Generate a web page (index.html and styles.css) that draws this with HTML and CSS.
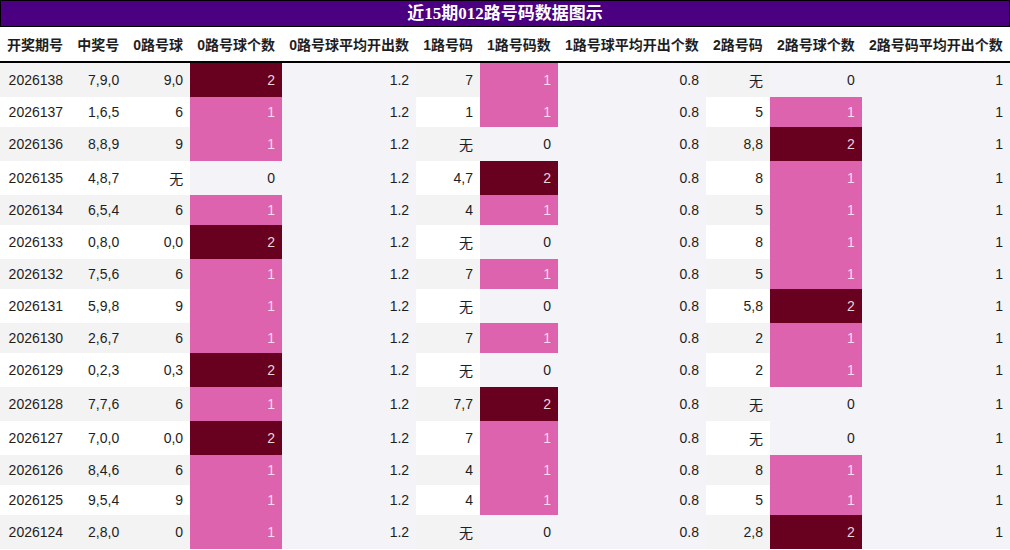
FILE: index.html
```html
<!DOCTYPE html>
<html lang="zh">
<head>
<meta charset="utf-8">
<title>近15期012路号码数据图示</title>
<link rel="stylesheet" href="styles.css">
</head>
<body>
<div class="title">近15期012路号码数据图示</div>
<table class="data">
<thead>
<tr><th>开奖期号</th><th>中奖号</th><th>0路号球</th><th>0路号球个数</th><th>0路号球平均开出数</th><th>1路号码</th><th>1路号码数</th><th>1路号球平均开出个数</th><th>2路号码</th><th>2路号球个数</th><th>2路号码平均开出个数</th></tr>
</thead>
<tbody>
<tr><td>2026138</td><td>7,9,0</td><td>9,0</td><td class="n2">2</td><td class="avg">1.2</td><td>7</td><td class="n1">1</td><td class="avg">0.8</td><td>无</td><td class="n0">0</td><td class="avg">1</td></tr>
<tr><td>2026137</td><td>1,6,5</td><td>6</td><td class="n1">1</td><td class="avg">1.2</td><td>1</td><td class="n1">1</td><td class="avg">0.8</td><td>5</td><td class="n1">1</td><td class="avg">1</td></tr>
<tr><td>2026136</td><td>8,8,9</td><td>9</td><td class="n1">1</td><td class="avg">1.2</td><td>无</td><td class="n0">0</td><td class="avg">0.8</td><td>8,8</td><td class="n2">2</td><td class="avg">1</td></tr>
<tr><td>2026135</td><td>4,8,7</td><td>无</td><td class="n0">0</td><td class="avg">1.2</td><td>4,7</td><td class="n2">2</td><td class="avg">0.8</td><td>8</td><td class="n1">1</td><td class="avg">1</td></tr>
<tr><td>2026134</td><td>6,5,4</td><td>6</td><td class="n1">1</td><td class="avg">1.2</td><td>4</td><td class="n1">1</td><td class="avg">0.8</td><td>5</td><td class="n1">1</td><td class="avg">1</td></tr>
<tr><td>2026133</td><td>0,8,0</td><td>0,0</td><td class="n2">2</td><td class="avg">1.2</td><td>无</td><td class="n0">0</td><td class="avg">0.8</td><td>8</td><td class="n1">1</td><td class="avg">1</td></tr>
<tr><td>2026132</td><td>7,5,6</td><td>6</td><td class="n1">1</td><td class="avg">1.2</td><td>7</td><td class="n1">1</td><td class="avg">0.8</td><td>5</td><td class="n1">1</td><td class="avg">1</td></tr>
<tr><td>2026131</td><td>5,9,8</td><td>9</td><td class="n1">1</td><td class="avg">1.2</td><td>无</td><td class="n0">0</td><td class="avg">0.8</td><td>5,8</td><td class="n2">2</td><td class="avg">1</td></tr>
<tr><td>2026130</td><td>2,6,7</td><td>6</td><td class="n1">1</td><td class="avg">1.2</td><td>7</td><td class="n1">1</td><td class="avg">0.8</td><td>2</td><td class="n1">1</td><td class="avg">1</td></tr>
<tr><td>2026129</td><td>0,2,3</td><td>0,3</td><td class="n2">2</td><td class="avg">1.2</td><td>无</td><td class="n0">0</td><td class="avg">0.8</td><td>2</td><td class="n1">1</td><td class="avg">1</td></tr>
<tr><td>2026128</td><td>7,7,6</td><td>6</td><td class="n1">1</td><td class="avg">1.2</td><td>7,7</td><td class="n2">2</td><td class="avg">0.8</td><td>无</td><td class="n0">0</td><td class="avg">1</td></tr>
<tr><td>2026127</td><td>7,0,0</td><td>0,0</td><td class="n2">2</td><td class="avg">1.2</td><td>7</td><td class="n1">1</td><td class="avg">0.8</td><td>无</td><td class="n0">0</td><td class="avg">1</td></tr>
<tr><td>2026126</td><td>8,4,6</td><td>6</td><td class="n1">1</td><td class="avg">1.2</td><td>4</td><td class="n1">1</td><td class="avg">0.8</td><td>8</td><td class="n1">1</td><td class="avg">1</td></tr>
<tr><td>2026125</td><td>9,5,4</td><td>9</td><td class="n1">1</td><td class="avg">1.2</td><td>4</td><td class="n1">1</td><td class="avg">0.8</td><td>5</td><td class="n1">1</td><td class="avg">1</td></tr>
<tr><td>2026124</td><td>2,8,0</td><td>0</td><td class="n1">1</td><td class="avg">1.2</td><td>无</td><td class="n0">0</td><td class="avg">0.8</td><td>2,8</td><td class="n2">2</td><td class="avg">1</td></tr>
</tbody>
</table>
</body>
</html>
```
FILE: styles.css
```css
html, body {
  margin: 0;
  padding: 0;
  background: #ffffff;
}

body {
  font-family: "Liberation Sans", "Noto Sans CJK SC", sans-serif;
  font-size: 14px;
  color: #1e1e1e;
}

.title {
  background: #4b0082;
  border: 1px solid #000000;
  color: #ffffff;
  font-family: "Liberation Serif", "Noto Sans CJK SC", serif;
  font-weight: bold;
  font-size: 17px;
  text-align: center;
  line-height: 25px;
  height: 25px;
}

.data {
  width: 100%;
  border-collapse: collapse;
  border-spacing: 0;
}

.data th {
  font-weight: bold;
  background: #ffffff;
  padding: 7px 7px;
  text-align: center;
  white-space: nowrap;
  border-bottom: 2px solid #000000;
}

.data td {
  padding: 7px 7px;
  text-align: right;
  white-space: nowrap;
}

.data tbody tr:nth-child(odd) td {
  background: #f3f3f3;
}

.data tbody tr:nth-child(even) td {
  background: #ffffff;
}

.data tbody tr td.avg,
.data tbody tr td.n0 {
  background: #f4f3f8;
}

.data tbody tr td.n1 {
  background: #de63ae;
  color: #f7dcee;
}

.data tbody tr td.n2 {
  background: #68001f;
  color: #e6d6da;
}
```
